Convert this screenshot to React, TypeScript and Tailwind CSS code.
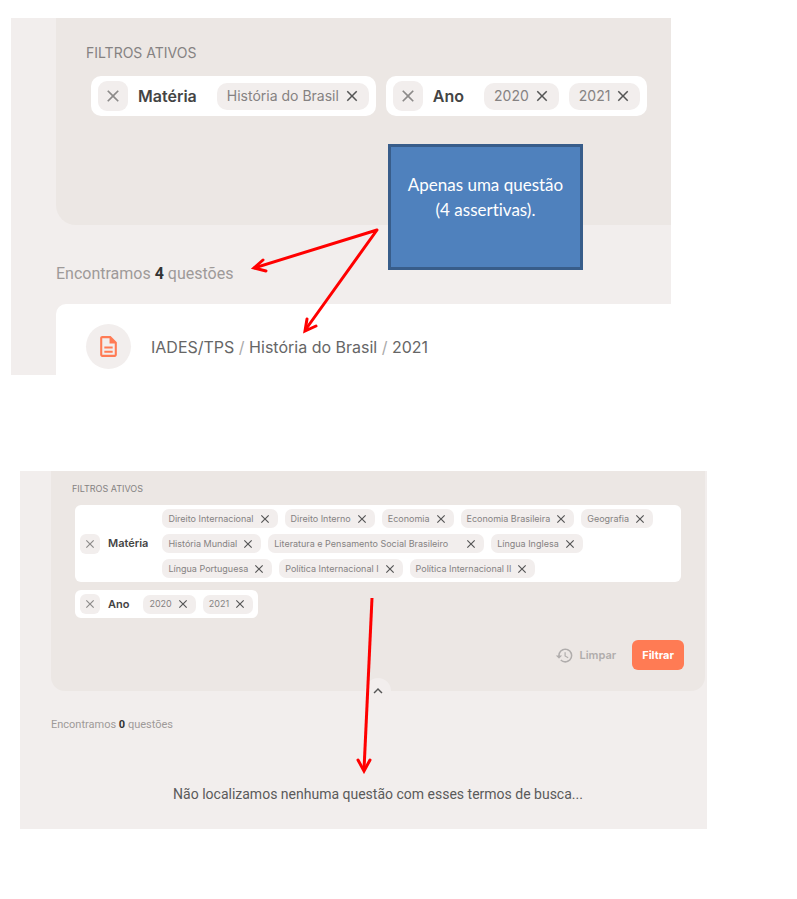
import { useState } from "react";
import { MdClose, MdHistory, MdKeyboardArrowUp, MdOutlineDescription } from "react-icons/md";

type Size = "lg" | "sm";
type Filter = { name: string; values: string[] };

const styles = {
  lg: {
    group: "gap-5 rounded-[10px] py-[5px] px-[7px]",
    head: "gap-[10px] text-base",
    clear: "size-[30px] rounded-[9px]",
    list: "gap-[10px]",
    chip: "h-[27px] gap-1 rounded-[10px] pl-[10px] pr-2 text-sm",
    clearIcon: 20,
    icon: 18,
  },
  sm: {
    group: "gap-[14px] rounded-md py-1 px-[5px]",
    head: "gap-2 text-[11px]",
    clear: "size-5 rounded-[6px]",
    list: "gap-x-[7px] gap-y-[6px]",
    chip: "h-[19px] gap-1 rounded-[7px] px-[6px] text-[9px]",
    clearIcon: 14,
    icon: 14,
  },
};

const firstFilters: Filter[] = [
  { name: "Matéria", values: ["História do Brasil"] },
  { name: "Ano", values: ["2020", "2021"] },
];

const secondFilters: Filter[] = [
  {
    name: "Matéria",
    values: [
      "Direito Internacional", "Direito Interno", "Economia", "Economia Brasileira", "Geografia",
      "História Mundial", "Literatura e Pensamento Social Brasileiro", "Língua Inglesa",
      "Língua Portuguesa", "Política Internacional I", "Política Internacional II",
    ],
  },
  { name: "Ano", values: ["2020", "2021"] },
];

function FilterGroup({ filter, size, onRemove, onClear }: {
  filter: Filter; size: Size; onRemove: (value: string) => void; onClear: () => void;
}) {
  const s = styles[size];
  return (
    <div className={`flex items-center bg-white ${s.group}`}>
      <div className={`flex shrink-0 items-center font-semibold text-[#444] ${s.head}`}>
        <button onClick={onClear} aria-label={`Remover ${filter.name}`}
          className={`flex items-center justify-center bg-[#f2eeed] text-[#8c8a89] ${s.clear}`}>
          <MdClose size={s.clearIcon} />
        </button>
        <span>{filter.name}</span>
      </div>
      <ul className={`flex flex-wrap ${s.list}`}>
        {filter.values.map((v) => (
          <li key={v} className={`flex items-center bg-[#f2eeed] text-[#858282] ${s.chip}`}>
            <span className={v.length > 30 ? "pr-3" : ""}>{v}</span>
            <button onClick={() => onRemove(v)} aria-label={`Remover ${v}`} className="text-[#555]">
              <MdClose size={s.icon} />
            </button>
          </li>
        ))}
      </ul>
    </div>
  );
}

function FilterList({ initial, size, className }: { initial: Filter[]; size: Size; className: string }) {
  const [filters, setFilters] = useState(initial);

  const remove = (name: string, value: string) =>
    setFilters((fs) => fs.map((f) => (f.name === name ? { ...f, values: f.values.filter((v) => v !== value) } : f)));

  return (
    <div className={className}>
      {filters.map((f) => (
        <FilterGroup key={f.name} filter={f} size={size}
          onRemove={(v) => remove(f.name, v)}
          onClear={() => setFilters((fs) => fs.filter((x) => x.name !== f.name))} />
      ))}
    </div>
  );
}

export default function App() {
  return (
    <main className="min-h-screen bg-white pt-[18px] pb-[70px] font-['Inter',sans-serif]">
      {/* One question found */}
      <section className="relative ml-[11px] mr-[126px] bg-[#f2eeed] pl-[45px]">
        <div className="rounded-bl-[20px] bg-[#ece7e4] pt-[25px] pb-[109px] pl-[30px]">
          <h2 className="text-sm leading-5 text-[#858282]">FILTROS ATIVOS</h2>
          <FilterList initial={firstFilters} size="lg" className="mt-[13px] ml-[5px] flex flex-wrap gap-[10px]" />
        </div>
        <p className="pt-[37px] pb-[18px] font-['Roboto',sans-serif] text-base leading-6 text-[#9e9a99]">
          Encontramos <strong className="text-[#333]">4</strong> questões
        </p>
        <article className="flex items-center gap-5 rounded-tl-[10px] bg-white pt-5 pb-[6px] pl-[30px]">
          <span className="flex size-[45px] items-center justify-center rounded-full bg-[#f2eeed] text-[#ff7b54]">
            <MdOutlineDescription size={25} />
          </span>
          <h3 className="text-base text-[#666]">
            IADES/TPS <span className="text-[#aaa]">/</span> História do Brasil <span className="text-[#aaa]">/</span> 2021
          </h3>
        </article>

        {/* Callout and its arrows */}
        <div className="absolute top-[126px] left-[377px] h-[126px] w-[195px] border-3 border-[#385d8a] bg-[#4f81bd] pt-[25px] text-center font-['Lato',sans-serif] text-[17px] leading-[25px] text-white [font-variant-ligatures:none]">
          Apenas uma questão<br />(4 assertivas).
        </div>
        <svg className="pointer-events-none absolute top-[206px] left-[236px]" width="136" height="114" viewBox="0 0 136 114" fill="none" stroke="#f00" strokeWidth="3">
          <path d="M7 44 130 6 59 105" strokeLinejoin="round" />
          <path d="M16 36 7 44 19 47M60 95 58 107 69 102" strokeLinecap="round" />
        </svg>
      </section>

      {/* No question found */}
      <section className="relative mt-24 mr-[90px] ml-5 bg-[#f2eeed] pr-[2px] pb-[25px] pl-[31px]">
        <div className="relative rounded-b-[14px] bg-[#ece7e4] px-[21px] pt-[10px] pb-[21px]">
          <h2 className="text-[9px] leading-4 text-[#858282]">FILTROS ATIVOS</h2>
          <FilterList initial={secondFilters} size="sm" className="mx-[3px] mt-2 flex flex-wrap gap-2" />
          <div className="mt-[22px] flex items-center justify-end gap-4">
            <button className="flex items-center gap-[6px] text-[11px] font-semibold text-[#b0adac]">
              <MdHistory size={19} />
              Limpar
            </button>
            <button className="h-[30px] rounded-md bg-[#ff7b54] px-[10px] text-[11px] font-bold text-white">Filtrar</button>
          </div>
          <button aria-label="Recolher filtros"
            className="absolute -bottom-[13px] left-1/2 flex size-[26px] -translate-x-1/2 items-center justify-center rounded-full bg-[#f2eeed] text-[#555]">
            <MdKeyboardArrowUp size={18} />
          </button>
        </div>
        <p className="mt-[26px] font-['Roboto',sans-serif] text-[11px] leading-4 text-[#9e9a99]">
          Encontramos <strong className="text-[#333]">0</strong> questões
        </p>
        <p className="mt-[51px] text-center font-['Roboto',sans-serif] text-sm leading-5 text-[#5a5a5a]">
          Não localizamos nenhuma questão com esses termos de busca...
        </p>
        <svg className="pointer-events-none absolute top-[125px] left-[334px]" width="24" height="178" viewBox="0 0 24 178" fill="none" stroke="#f00" strokeWidth="3">
          <path d="M18 2 10 174" />
          <path d="M4 164 10 175 16 164" strokeLinecap="round" />
        </svg>
      </section>
    </main>
  );
}
